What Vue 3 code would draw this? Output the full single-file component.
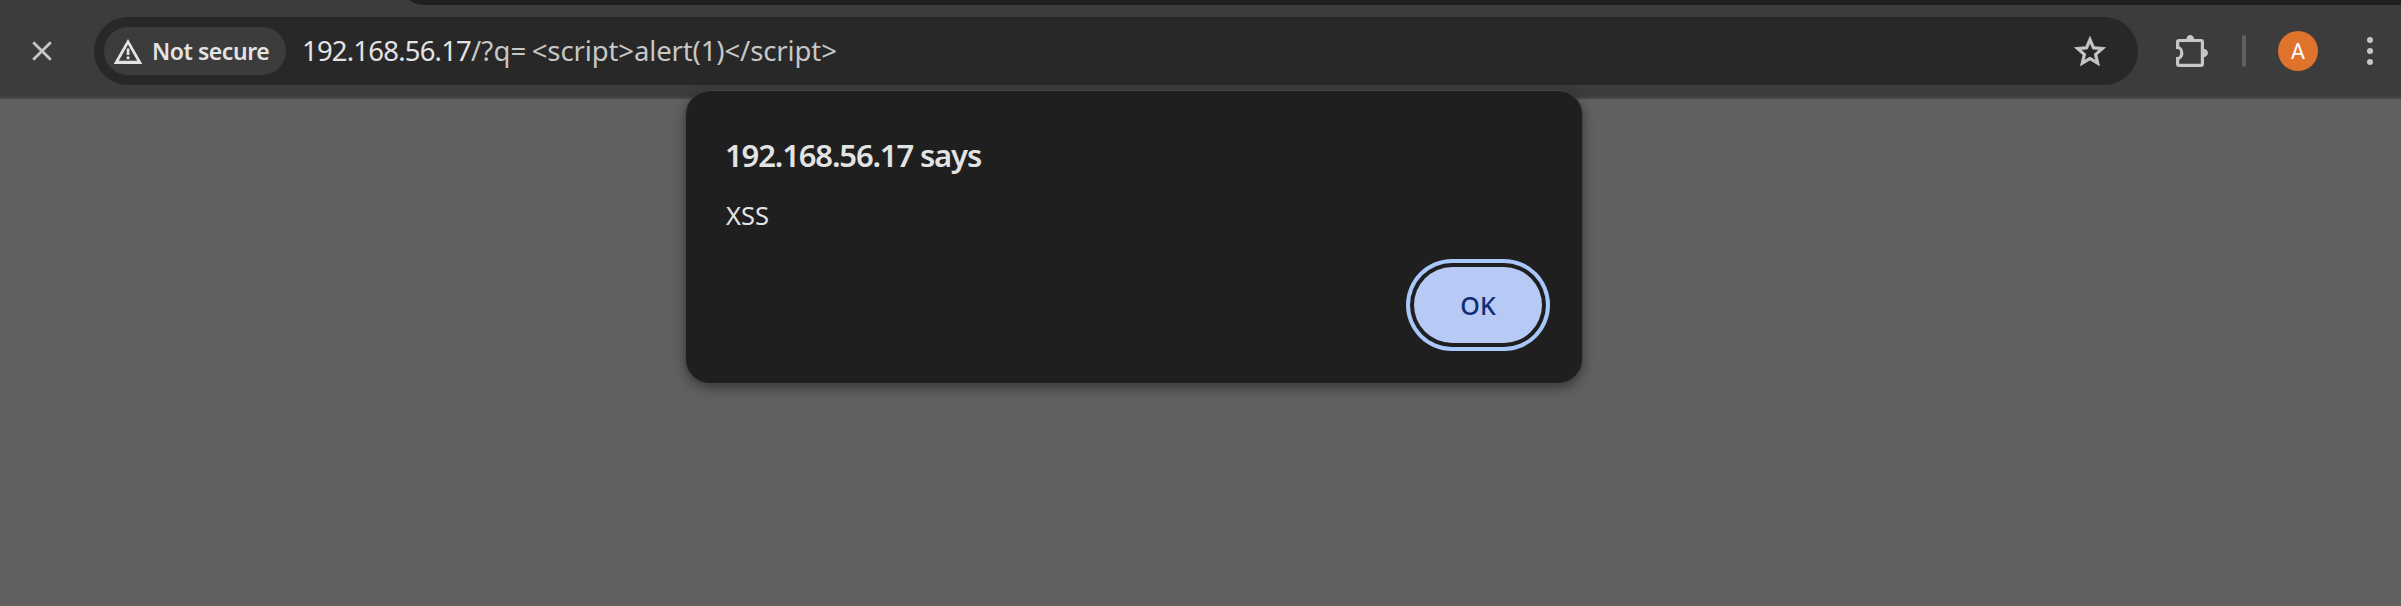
<script setup>
const dots = [40, 51, 62]
</script>

<template>
  <div class="window">
    <div class="tabstrip"></div>
    <header class="toolbar">
      <svg class="stop" viewBox="0 0 20 20"><path d="M1.2 1.2 18.8 18.8M18.8 1.2 1.2 18.8" /></svg>
      <div class="omnibox">
        <div class="chip">
          <svg class="warn" viewBox="0 0 28 25">
            <path fill-rule="evenodd" d="M14 0 28.3 25H-0.3ZM14 5.5 4.8 21.800H23.2Z" />
            <path d="M12.7 9.5h2.7v6.5h-2.7zM12.7 17.6h2.7v2.7h-2.7z" />
          </svg>
          <span class="chip-text">Not secure</span>
        </div>
        <div class="url"><span class="host">192.168.56.17</span><span class="path query">/?q=</span><span class="path">&lt;script&gt;alert(1)&lt;/script&gt;</span></div>
        <svg class="star" viewBox="1.8 1.7 20.4 19.5">
          <path d="M22 9.24l-7.19-.62L12 2 9.19 8.63 2 9.24l5.46 4.73L5.82 21 12 17.27 18.18 21l-1.63-7.03L22 9.24zM12 15.4l-3.76 2.27 1-4.28-3.32-2.88 4.38-.38L12 6.1l1.71 4.04 4.38.38-3.32 2.88 1 4.28L12 15.4z" />
        </svg>
      </div>
      <svg class="puzzle" viewBox="0 0 32 32">
        <path class="line" d="M3 5.5H25Q26.4 5.5 26.4 6.9V29Q26.4 30.4 25 30.4H3Q1.6 30.4 1.6 29V23.5A4.2 5.5 0 0 0 1.6 12.5V6.9Q1.6 5.5 3 5.5Z" />
        <path d="M10.2 5a4 5 0 0 1 8 0zM27 13.8a5 4.2 0 0 1 0 8.4z" />
      </svg>
      <div class="divider"></div>
      <div class="avatar">A</div>
      <svg class="menu" viewBox="0 34 6 34"><circle v-for="y in dots" :key="y" cx="3" :cy="y" r="3" /></svg>
    </header>
    <main class="page"></main>
    <section class="dialog">
      <h1>192.168.56.17 says</h1>
      <p>XSS</p>
      <div class="actions"><button>OK</button></div>
    </section>
  </div>
</template>

<style>
body { margin: 0; background: #606060; }
</style>

<style scoped>
.window {
  position: relative;
  width: 2401px;
  height: 606px;
  overflow: hidden;
  background: #606060;
  font-family: "Noto Sans", "Open Sans", sans-serif;
}
.tabstrip {
  position: absolute;
  z-index: 1;
  top: -19px;
  left: 400px;
  right: -30px;
  height: 24px;
  border-radius: 0 0 0 24px;
  background: #1f2120;
}
.toolbar {
  display: flex;
  align-items: center;
  box-sizing: border-box;
  height: 99px;
  padding: 5px 0 0 32px;
  border-bottom: 2px solid #484848;
  background: #3c3c3c;
}
.toolbar > * { flex: none; }
.stop { width: 20px; height: 20px; stroke: #c7c7c7; stroke-width: 2.8; fill: none; }
.omnibox {
  display: flex;
  align-items: center;
  box-sizing: border-box;
  width: 2044px;
  height: 68px;
  margin-left: 42px;
  padding: 0 32px 0 10px;
  border-radius: 34px;
  background: #282828;
}
.chip {
  display: flex;
  align-items: center;
  box-sizing: border-box;
  width: 182px;
  height: 48px;
  padding-left: 10px;
  border-radius: 24px;
  background: #3c3c3c;
}
.warn { width: 28px; height: 25px; fill: #e3e3e3; overflow: visible; }
.chip-text {
  margin-left: 10px;
  font-size: 23px;
  font-weight: 600;
  line-height: 47px;
  letter-spacing: -0.45px;
  white-space: nowrap;
  color: #e3e3e3;
}
.url { margin-left: 16px; font-size: 27.5px; line-height: 68px; white-space: nowrap; }
.host { color: #e3e3e3; letter-spacing: -0.8px; }
.path { color: #c7c7c7; letter-spacing: -0.12px; }
.query { margin-right: 5.5px; letter-spacing: 0.1px; }
.star { width: 32px; height: 30px; margin-left: auto; fill: #c7c7c7; stroke: #c7c7c7; stroke-width: 0.5; }
.puzzle { width: 32px; height: 32px; margin-left: 38px; fill: #c7c7c7; }
.puzzle .line { fill: none; stroke: #c7c7c7; stroke-width: 3.2; }
.divider { width: 4px; height: 32px; margin-left: 34px; border-radius: 2px; background: #606060; }
.avatar {
  width: 40px;
  height: 40px;
  margin-left: 32px;
  border-radius: 50%;
  background: #df732b;
  color: #fff;
  font-family: Roboto, sans-serif;
  font-size: 22px;
  line-height: 41px;
  text-align: center;
}
.menu { width: 6px; height: 34px; margin-left: 49px; fill: #c7c7c7; }
.dialog {
  position: absolute;
  top: 91px;
  left: 686px;
  box-sizing: border-box;
  width: 896px;
  height: 292px;
  padding: 40px 32px 32px 39px;
  border-radius: 24px;
  background: #1f1f1f;
  color: #e3e3e3;
  box-shadow: 0 0 0 1px #454545, 0 4px 12px 1px rgba(0, 0, 0, 0.4);
}
h1 { margin: 0; font-size: 31px; font-weight: 600; line-height: 48px; letter-spacing: -1.15px; white-space: nowrap; }
p { margin: 16px 0 0; padding-left: 1px; font-size: 25.5px; line-height: 40px; letter-spacing: 0; }
.actions { display: flex; justify-content: flex-end; padding: 32px 8px 0 0; }
button {
  width: 128px;
  height: 76px;
  padding: 0;
  border: 0;
  border-radius: 38px;
  background: #b6caf5;
  box-shadow: 0 0 0 4px #1f1f1f, 0 0 0 8px #a8c7fa;
  color: #0d2e75;
  font: 500 25px/77px "Noto Sans", "Open Sans", sans-serif;
  letter-spacing: 0;
}
</style>
